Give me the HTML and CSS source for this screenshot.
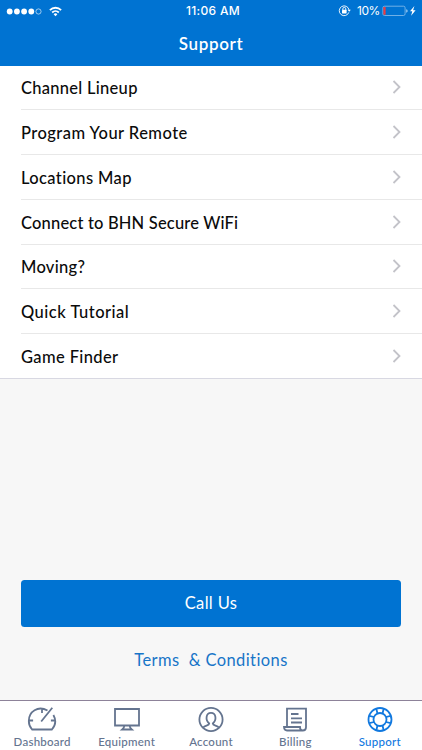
FILE: index.html
```
<!DOCTYPE html>
<html lang="en">
<head>
<meta charset="utf-8">
<title>Support</title>
<link rel="stylesheet" href="styles.css">
</head>
<body>
<div class="screen">
  <header class="header">
    <div class="status">
      <svg class="signal" width="66" height="20" viewBox="0 0 66 20">
        <g fill="#fff"><circle cx="9.7" cy="9.5" r="2.9"/><circle cx="16.9" cy="9.5" r="2.9"/><circle cx="24.1" cy="9.5" r="2.9"/><circle cx="31.3" cy="9.5" r="2.9"/></g>
        <circle cx="38.5" cy="9.5" r="2.6" fill="none" stroke="#fff" stroke-width=".6"/>
        <g fill="none" stroke="#fff" stroke-width="1.8"><path d="M49.9 8.100a7.800 7.800 0 0 1 11.200 0"/><path d="M52.200 10.500a4.700 4.700 0 0 1 6.600 0"/></g>
        <path d="M55.500 14.200l-1.900-2a2.700 2.700 0 0 1 3.800 0z" fill="#fff"/>
      </svg>
      <span class="time">11:06 AM</span>
      <div class="power">
        <svg width="14" height="14" viewBox="0 0 14 14" fill="none" stroke="#fff">
          <path d="M10.800 8.400a4.900 4.900 0 1 1 .2-2.500" stroke-width=".9"/><path d="M9.600 5.800h3.200l-1.600 2z" fill="#fff" stroke="none"/>
          <path d="M4.800 6V4.900a1.500 1.500 0 0 1 3 0V6" stroke-width=".9"/><rect x="4" y="5.800" width="4.600" height="3.600" rx=".4" fill="#fff" stroke="none"/>
        </svg>
        <span class="percent">10%</span>
        <svg width="36" height="14" viewBox="0 0 36 14">
          <rect x=".9" y="2.200" width="22.200" height="9.300" rx="1.600" fill="none" stroke="#8cc0ec" stroke-width=".8"/>
          <path d="M1.400 3h2.200v7.700H1.400z" fill="#f03b40"/><path d="M24.300 5.300q1.300.3 1.300 1.700t-1.300 1.700z" fill="#b9daf5"/>
          <path d="M32.400 2l-4.400 5.300h2.300l-1.200 4.400 4.500-5.400h-2.500z" fill="#fff"/>
        </svg>
      </div>
    </div>
    <h1 class="title">Support</h1>
  </header>
  <main class="content">
    <ul class="list">
      <li class="row"><span class="label channel">Channel Lineup</span><svg class="chevron" viewBox="0 0 10 14"><path d="M1.500 1l6 6-6 6"/></svg></li>
      <li class="row"><span class="label program">Program Your Remote</span><svg class="chevron" viewBox="0 0 10 14"><path d="M1.500 1l6 6-6 6"/></svg></li>
      <li class="row"><span class="label locations">Locations Map</span><svg class="chevron" viewBox="0 0 10 14"><path d="M1.500 1l6 6-6 6"/></svg></li>
      <li class="row"><span class="label connect">Connect to BHN Secure WiFi</span><svg class="chevron" viewBox="0 0 10 14"><path d="M1.500 1l6 6-6 6"/></svg></li>
      <li class="row"><span class="label moving">Moving?</span><svg class="chevron" viewBox="0 0 10 14"><path d="M1.500 1l6 6-6 6"/></svg></li>
      <li class="row"><span class="label quick">Quick Tutorial</span><svg class="chevron" viewBox="0 0 10 14"><path d="M1.500 1l6 6-6 6"/></svg></li>
      <li class="row"><span class="label game">Game Finder</span><svg class="chevron" viewBox="0 0 10 14"><path d="M1.500 1l6 6-6 6"/></svg></li>
    </ul>
    <div class="actions">
      <button class="call">Call Us</button>
      <a class="terms">Terms&nbsp; &amp; Conditions</a>
    </div>
  </main>
  <nav class="tabs">
    <a class="tab"><svg class="icon" viewBox="0 0 30 26"><path d="M20.500 4.500C11-.8 1.800 5.500 1.800 15c0 3.500 1.300 6.300 3.300 8.500h19.800c3.500-4 4.300-9.500 1.500-14.500M15 3v4M2.300 14.500h3.800M27.700 14.500h-3.800M14.200 15.500L25.300 1.800"/></svg><span>Dashboard</span></a>
    <a class="tab"><svg class="icon" viewBox="0 0 30 26"><path d="M3 3h24v16.500H3zM12.500 19.500q-.3 2.400-2.300 4h9.600q-2-1.600-2.300-4"/></svg><span>Equipment</span></a>
    <a class="tab"><svg class="icon" viewBox="0 0 30 26"><circle cx="15" cy="13.500" r="11.600"/><path d="M7.200 21.600c1.600-2.300 6-1.900 6-4.100-4.100-3.400-3.400-10.600 1.800-10.600s5.900 7.200 1.800 10.600c0 2.200 4.400 1.800 6 4.100"/></svg><span>Account</span></a>
    <a class="tab"><svg class="icon" viewBox="0 0 30 26"><path d="M7 20.500V2.700h19v18.500q0 3.300-3.300 3.300H7q-2.800 0-3-3.500h16q0 3.500 2.700 3.500M11 8h7.500M11 12.300h11M11 16.500h11"/></svg><span>Billing</span></a>
    <a class="tab active"><svg class="icon" viewBox="0 0 30 26"><circle cx="15" cy="13.500" r="11.500"/><circle cx="15" cy="13.500" r="6.500"/><path d="M11.300 2.800l1.200 4.700M18.700 2.800l-1.200 4.700M11.300 24.200l1.200-4.700M18.700 24.200l-1.200-4.700M4.300 9.800L9 11M4.300 17.200L9 16M25.700 9.800L21 11M25.700 17.200L21 16"/></svg><span>Support</span></a>
  </nav>
</div>
</body>
</html>
```
FILE: styles.css
```
* { box-sizing: border-box; }
body { margin: 0; font-family: Lato, "Noto Sans", sans-serif; }
.screen { width: 422px; height: 750px; display: flex; flex-direction: column; background: #f7f7f7; overflow: hidden; }
.header { height: 65.5px; background: #0073d2; color: #fff; flex: none; }
.status { height: 22px; display: grid; grid-template-columns: 1fr auto 1fr; align-items: center; }
.signal { display: block; margin-top: 1px; }
.time { font: 500 12px/20px Inter, sans-serif; letter-spacing: .32px; margin-left: 4px; }
.power { display: flex; align-items: center; justify-content: flex-end; padding-right: 4px; }
.percent { font: 400 12px/20px Inter, sans-serif; margin: 0 2px 0 5px; letter-spacing: -.4px; }
.title { margin: 10px 0 0; text-align: center; font-size: 17px; line-height: 24px; font-weight: 600; letter-spacing: .65px; }
.content { flex: 1; display: flex; flex-direction: column; justify-content: space-between; min-height: 0; }
.list { margin: 0; padding: 0 0 0 21px; list-style: none; background: #fff; border-bottom: 1px solid #d8d8e2; }
.row { height: 44.75px; display: flex; align-items: center; justify-content: space-between; padding-right: 20px; border-bottom: 1px solid #e8e8e8; }
.row:last-child { border-bottom: 0; height: 44px; }
.label { padding-top: 2px; font-size: 16.5px; line-height: 24px; font-weight: 500; color: #0b0b0b; white-space: nowrap; }
.channel { letter-spacing: .28px; }
.program { letter-spacing: .46px; }
.locations { letter-spacing: .37px; }
.connect { letter-spacing: .18px; }
.moving { letter-spacing: .28px; }
.quick { letter-spacing: .5px; }
.game { letter-spacing: .37px; }
.chevron { width: 10px; height: 14px; fill: none; stroke: #c3c3c9; stroke-width: 1.8; }
.actions { display: flex; flex-direction: column; align-items: center; padding: 0 21px 28px; }
.call { width: 100%; height: 47px; border: 0; border-radius: 3.5px; background: #0073d2; color: #fff; font: 400 16.5px/24px Lato, sans-serif; letter-spacing: .35px; padding: 0 0 1px; }
.terms { margin-top: 21px; font-size: 16.5px; line-height: 24px; letter-spacing: .4px; color: #1775c8; }
.tabs { height: 50px; flex: none; display: grid; grid-template-columns: repeat(5, 1fr); background: #fff; border-top: 1px solid #8d8299; color: #64748f; }
.tab { display: flex; flex-direction: column; align-items: center; padding: 5px 0 0; font-size: 11.5px; line-height: 14px; letter-spacing: .25px; font-weight: 500; }
.icon { width: 30px; height: 26px; fill: none; stroke: currentColor; stroke-width: 1.8; margin-bottom: 3px; }
.active { color: #1279df; }
```
